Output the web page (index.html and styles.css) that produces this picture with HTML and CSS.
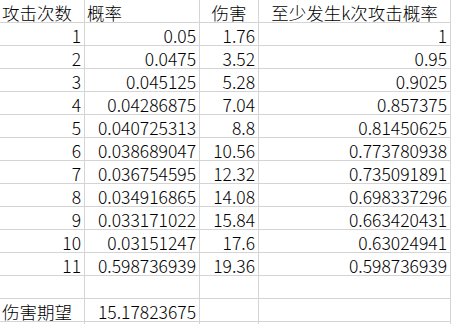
FILE: index.html
```html
<!DOCTYPE html>
<html>
<head>
<meta charset="utf-8">
<link rel="stylesheet" href="styles.css">
</head>
<body>
<div class="sheet">
  <div class="c l">攻击次数</div><div class="c l">概率</div><div class="c m">伤害</div><div class="c m">至少发生k次攻击概率</div>
  <div class="c r">1</div><div class="c r">0.05</div><div class="c r">1.76</div><div class="c r">1</div>
  <div class="c r">2</div><div class="c r">0.0475</div><div class="c r">3.52</div><div class="c r">0.95</div>
  <div class="c r">3</div><div class="c r">0.045125</div><div class="c r">5.28</div><div class="c r">0.9025</div>
  <div class="c r">4</div><div class="c r">0.04286875</div><div class="c r">7.04</div><div class="c r">0.857375</div>
  <div class="c r">5</div><div class="c r">0.040725313</div><div class="c r">8.8</div><div class="c r">0.81450625</div>
  <div class="c r">6</div><div class="c r">0.038689047</div><div class="c r">10.56</div><div class="c r">0.773780938</div>
  <div class="c r">7</div><div class="c r">0.036754595</div><div class="c r">12.32</div><div class="c r">0.735091891</div>
  <div class="c r">8</div><div class="c r">0.034916865</div><div class="c r">14.08</div><div class="c r">0.698337296</div>
  <div class="c r">9</div><div class="c r">0.033171022</div><div class="c r">15.84</div><div class="c r">0.663420431</div>
  <div class="c r">10</div><div class="c r">0.03151247</div><div class="c r">17.6</div><div class="c r">0.63024941</div>
  <div class="c r">11</div><div class="c r">0.598736939</div><div class="c r">19.36</div><div class="c r">0.598736939</div>
  <div class="c"></div><div class="c"></div><div class="c"></div><div class="c"></div>
  <div class="c l">伤害期望</div><div class="c r">15.17823675</div><div class="c"></div><div class="c"></div>
  <div class="c tail"></div><div class="c tail"></div><div class="c tail"></div><div class="c tail"></div>
</div>
</body>
</html>
```
FILE: styles.css
```css
html, body {
  margin: 0;
  padding: 0;
  background: #fff;
}
.sheet {
  display: grid;
  grid-template-columns: 85px 115px 59px 192px;
  width: 451px;
  font-family: "Noto Sans CJK SC", sans-serif;
  font-size: 17.5px;
  font-weight: 300;
  color: #000;
}
.c {
  box-sizing: border-box;
  height: 23px;
  border-right: 1px solid #d4d4d4;
  border-bottom: 1px solid #d4d4d4;
  padding: 3px 3px 0 3px;
  line-height: 19px;
  white-space: nowrap;
}
.l { text-align: left; padding-left: 2px; }
.r { text-align: right; }
.m { text-align: center; padding: 3px 0 0 0; }
.tail { height: 2px; border-bottom: 0; padding: 0; }
```
